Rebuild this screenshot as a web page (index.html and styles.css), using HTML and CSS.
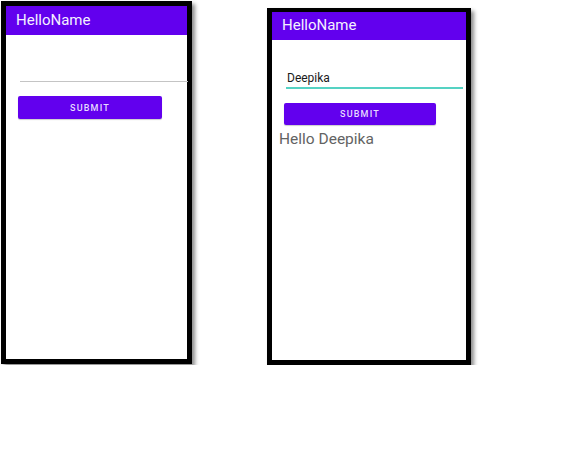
FILE: index.html
```html
<!DOCTYPE html>
<html>
<head>
<meta charset="utf-8">
<link rel="stylesheet" href="styles.css">
</head>
<body>
<div class="stage">
  <div class="phone phone-a">
    <div class="appbar">HelloName</div>
    <div class="content content-a">
      <div class="field field-empty"></div>
      <button class="btn btn-a">SUBMIT</button>
    </div>
  </div>
  <div class="phone phone-b">
    <div class="appbar appbar-b">HelloName</div>
    <div class="content content-b">
      <div class="field field-focus">Deepika</div>
      <button class="btn btn-b">SUBMIT</button>
      <div class="greeting">Hello Deepika</div>
    </div>
  </div>
</div>
</body>
</html>
```
FILE: styles.css
```css
html, body {
  margin: 0;
  padding: 0;
  background: #ffffff;
  font-family: Roboto, "Liberation Sans", sans-serif;
}
.stage {
  display: flex;
  align-items: flex-start;
  gap: 75px;
  padding: 1px 0 0 1px;
}
.phone {
  box-sizing: border-box;
  border: 5px solid #000;
  background: #fff;
  box-shadow: 3px 3px 4px rgba(0, 0, 0, 0.45);
  display: flex;
  flex-direction: column;
}
.phone-a {
  width: 191px;
  height: 363px;
}
.phone-b {
  width: 204px;
  height: 357px;
  margin-top: 7px;
  border-top-width: 4px;
}
.appbar {
  background: #6200ee;
  color: #f4f0ff;
  height: 29px;
  font-size: 15px;
  line-height: 29px;
  padding-left: 10px;
}
.appbar-b {
  height: 28px;
  line-height: 27px;
}
.content {
  display: flex;
  flex-direction: column;
  align-items: flex-start;
}
.content-a {
  padding: 46px 0 0 12px;
}
.content-b {
  padding: 29px 0 0 12px;
}
.field {
  box-sizing: border-box;
  margin-left: 2px;
}
.field-empty {
  width: 168px;
  border-bottom: 1.5px solid #c4c4c4;
  height: 1px;
}
.field-focus {
  width: 177px;
  height: 20px;
  font-size: 12px;
  line-height: 18px;
  color: #1a1a1a;
  padding-left: 1px;
  border-bottom: 2px solid #55d2c3;
}
.btn {
  box-sizing: border-box;
  border: none;
  border-radius: 2px;
  background: #6200ee;
  color: #e6dcff;
  font-family: Roboto, "Liberation Sans", sans-serif;
  font-size: 9px;
  font-weight: 500;
  letter-spacing: 1.2px;
  padding: 0;
  box-shadow: 0 1px 1px rgba(0, 0, 0, 0.2);
}
.btn-a {
  width: 144px;
  height: 23px;
  margin-top: 14px;
}
.btn-b {
  width: 152px;
  height: 22px;
  margin-top: 14px;
}
.greeting {
  margin-left: -5px;
  margin-top: 5px;
  font-size: 15.5px;
  color: #636363;
  font-weight: 400;
}
```
